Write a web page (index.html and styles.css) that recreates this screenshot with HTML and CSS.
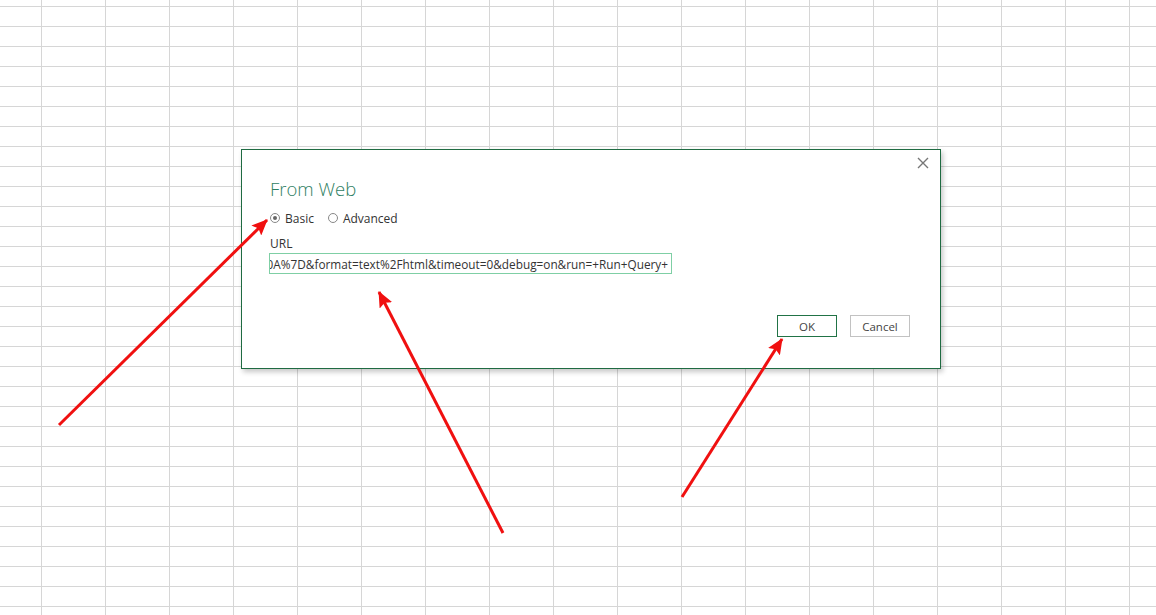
FILE: index.html
```html
<!DOCTYPE html>
<html lang="en">
<head>
<meta charset="utf-8">
<title>From Web</title>
<link rel="stylesheet" href="styles.css">
</head>
<body>
<main class="sheet">
  <section class="dialog">
    <button class="close" aria-label="Close">
      <svg width="12" height="12" viewBox="0 0 12 12"><path d="M1 1L11 11M11 1L1 11" stroke="#777" stroke-width="1.4" fill="none"/></svg>
    </button>
    <h1 class="title">From Web</h1>
    <div class="modes">
      <label class="radio"><span class="dot checked"></span>Basic</label>
      <label class="radio"><span class="dot"></span>Advanced</label>
    </div>
    <div class="label">URL</div>
    <div class="input"><span class="input-text">0A%7D&amp;format=text%2Fhtml&amp;timeout=0&amp;debug=on&amp;run=+Run+Query+</span></div>
    <div class="actions">
      <button class="btn primary">OK</button>
      <button class="btn">Cancel</button>
    </div>
  </section>
</main>
<svg class="arrows" width="1156" height="615" viewBox="0 0 1156 615">
  <defs>
    <marker id="head" markerUnits="userSpaceOnUse" markerWidth="16" markerHeight="14" refX="15" refY="7" orient="auto">
      <path d="M0 0L16 7L0 14L3 7Z" fill="#f01010"/>
    </marker>
  </defs>
  <line x1="59" y1="425" x2="267" y2="220" stroke="#f01010" stroke-width="3" marker-end="url(#head)"/>
  <line x1="503" y1="533" x2="379" y2="292" stroke="#f01010" stroke-width="3" marker-end="url(#head)"/>
  <line x1="682" y1="497" x2="782" y2="339" stroke="#f01010" stroke-width="3" marker-end="url(#head)"/>
</svg>
</body>
</html>
```
FILE: styles.css
```css
html, body {
  margin: 0;
  padding: 0;
}
body {
  width: 1156px;
  height: 615px;
  overflow: hidden;
  position: relative;
  font-family: "Open Sans", "Noto Sans", sans-serif;
  background-color: #fff;
  background-image:
    linear-gradient(to right, #d6d6d6 1px, transparent 1px),
    linear-gradient(to bottom, #d6d6d6 1px, transparent 1px);
  background-size: 64px 20px;
  background-position: 41px 6px;
}
.sheet {
  padding: 149px 0 0 241px;
}
.dialog {
  position: relative;
  box-sizing: border-box;
  width: 700px;
  height: 220px;
  background: #fff;
  border: 1px solid #1f6b42;
  box-shadow: 2px 3px 5px rgba(0, 0, 0, 0.22);
  padding: 26px 0 0 28px;
}
.close {
  position: absolute;
  top: 5px;
  right: 9px;
  width: 16px;
  height: 16px;
  border: 0;
  padding: 0;
  background: none;
  display: flex;
  align-items: center;
  justify-content: center;
}
.title {
  margin: 0;
  font-weight: 300;
  font-size: 18.5px;
  line-height: 26px;
  color: #2f8063;
}
.modes {
  display: flex;
  gap: 14px;
  margin-top: 8px;
  height: 16px;
  align-items: center;
}
.radio {
  display: flex;
  align-items: center;
  gap: 5px;
  font-size: 12px;
  color: #333;
}
.dot {
  box-sizing: border-box;
  width: 10px;
  height: 10px;
  border: 1px solid #888;
  border-radius: 50%;
  background: #fff;
  position: relative;
}
.dot.checked::after {
  content: "";
  position: absolute;
  left: 2px;
  top: 2px;
  width: 4px;
  height: 4px;
  border-radius: 50%;
  background: #666;
}
.label {
  margin-top: 10px;
  font-size: 12px;
  line-height: 16px;
  color: #333;
}
.input {
  box-sizing: border-box;
  width: 403px;
  height: 21px;
  margin-top: 1px;
  margin-left: -1px;
  border: 1px solid #7fcfa5;
  overflow: hidden;
  white-space: nowrap;
  display: flex;
  align-items: center;
  justify-content: flex-end;
  padding-right: 3px;
}
.input-text {
  font-size: 11.8px;
  color: #333;
}
.actions {
  display: flex;
  gap: 13px;
  margin-top: 41px;
  margin-left: 507px;
}
.btn {
  box-sizing: border-box;
  width: 60px;
  height: 22px;
  border: 1px solid #c2c2c2;
  background: #fff;
  font-family: "Open Sans", "Noto Sans", sans-serif;
  font-size: 11.5px;
  color: #444;
  padding: 0;
}
.btn.primary {
  border-color: #217346;
}
.arrows {
  position: absolute;
  left: 0;
  top: 0;
}
```
